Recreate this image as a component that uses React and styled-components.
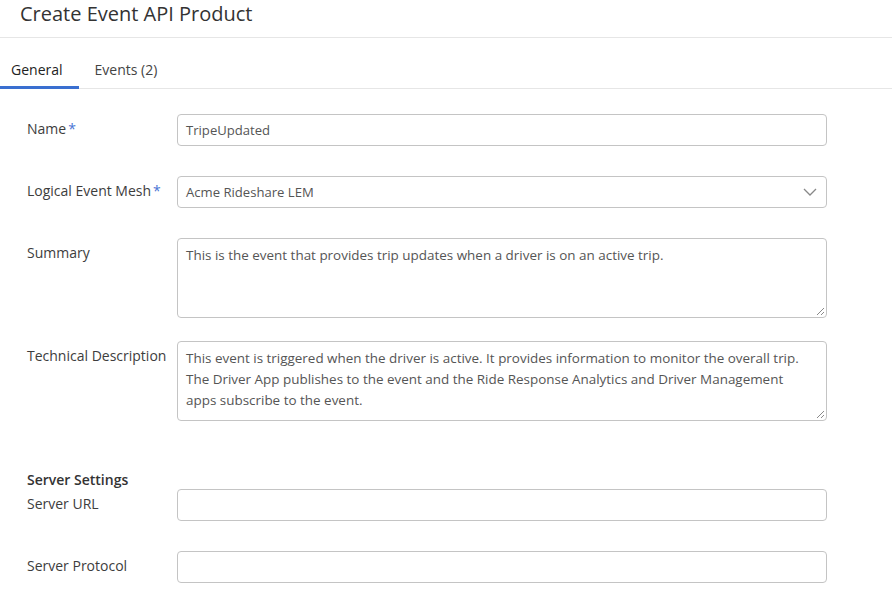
import React from 'react';
import styled, { createGlobalStyle } from 'styled-components';

const GlobalStyle = createGlobalStyle`
  html, body {
    margin: 0;
    padding: 0;
    background: #fff;
    font-family: 'Open Sans', 'Liberation Sans', sans-serif;
    color: #333;
  }
`;

const StyledPage = styled.div`
  width: 892px;
  height: 614px;
  overflow: hidden;
  background: #fff;
`;

const StyledHeader = styled.div`
  height: 37px;
  border-bottom: 1px solid #e6e6e6;
  padding-left: 20px;
`;

const StyledTitle = styled.h1`
  margin: 0;
  font-size: 20px;
  font-weight: 400;
  line-height: 28px;
  color: #333;
`;

const StyledTabs = styled.div`
  display: flex;
  height: 50px;
  border-bottom: 1px solid #e6e6e6;
`;

const StyledTab = styled.div`
  display: flex;
  align-items: flex-end;
  padding: 0 16px 7px ${({ $left }) => $left}px;
  font-size: 14px;
  line-height: 19px;
  color: ${({ $active }) => ($active ? '#222' : '#444')};
  border-bottom: 3px solid ${({ $active }) => ($active ? '#3a6fd0' : 'transparent')};
  margin-bottom: -1px;
`;

const StyledForm = styled.div`
  padding: 25px 0 0 27px;
`;

const StyledRow = styled.div`
  display: flex;
  align-items: flex-start;
  margin-bottom: ${({ $gap }) => $gap}px;
`;

const StyledLabel = styled.div`
  width: 150px;
  padding-top: 6px;
  font-size: 14px;
  line-height: 18px;
  color: #3d3d3d;
`;

const StyledStar = styled.span`
  color: #4a74d4;
  margin-left: 2px;
`;

const StyledField = styled.div`
  position: relative;
  width: 650px;
  height: ${({ $h }) => $h}px;
  box-sizing: border-box;
  border: 1px solid #c4c4c4;
  border-radius: 4px;
  padding: ${({ $multi }) => ($multi ? '6px 24px 6px 8px' : '0 8px')};
  display: ${({ $multi }) => ($multi ? 'block' : 'flex')};
  align-items: center;
  font-size: ${({ $multi }) => ($multi ? '13.45px' : '13.1px')};
  line-height: 21px;
  color: #555;
`;

const StyledChevron = styled.svg`
  position: absolute;
  right: 9px;
  top: 50%;
  transform: translateY(-50%);
`;

const StyledGrip = styled.svg`
  position: absolute;
  right: 1px;
  bottom: 1px;
`;

const StyledSection = styled.div`
  font-size: 14px;
  font-weight: 600;
  color: #333;
  line-height: 18px;
`;

const Grip = () => (
  <StyledGrip width="9" height="9" viewBox="0 0 9 9">
    <path d="M8 1 L1 8 M8 5 L5 8" stroke="#8a8a8a" strokeWidth="1" fill="none" />
  </StyledGrip>
);

const Field = ({ label, required, value, h = 32, multi, select, gap }) => (
  <StyledRow $gap={gap}>
    <StyledLabel>
      {label}
      {required && <StyledStar>*</StyledStar>}
    </StyledLabel>
    <StyledField $h={h} $multi={multi}>
      {value}
      {select && (
        <StyledChevron width="14" height="8" viewBox="0 0 14 8">
          <path d="M1 1 L7 7 L13 1" stroke="#888" strokeWidth="1.3" fill="none" />
        </StyledChevron>
      )}
      {multi && <Grip />}
    </StyledField>
  </StyledRow>
);

const App = () => (
  <StyledPage>
    <GlobalStyle />
    <StyledHeader>
      <StyledTitle>Create Event API Product</StyledTitle>
    </StyledHeader>
    <StyledTabs>
      <StyledTab $active $left={11}>General</StyledTab>
      <StyledTab $left={16}>Events (2)</StyledTab>
    </StyledTabs>
    <StyledForm>
      <Field label="Name" required value="TripeUpdated" gap={30} />
      <Field label="Logical Event Mesh" required value="Acme Rideshare LEM" select gap={30} />
      <Field
        label="Summary"
        multi
        h={80}
        gap={23}
        value="This is the event that provides trip updates when a driver is on an active trip."
      />
      <Field
        label="Technical Description"
        multi
        h={80}
        gap={50}
        value="This event is triggered when the driver is active. It provides information to monitor the overall trip. The Driver App publishes to the event and the Ride Response Analytics and Driver Management apps subscribe to the event."
      />
      <StyledSection>Server Settings</StyledSection>
      <Field label="Server URL" value="" gap={30} />
      <Field label="Server Protocol" value="" gap={30} />
    </StyledForm>
  </StyledPage>
);

export default App;
